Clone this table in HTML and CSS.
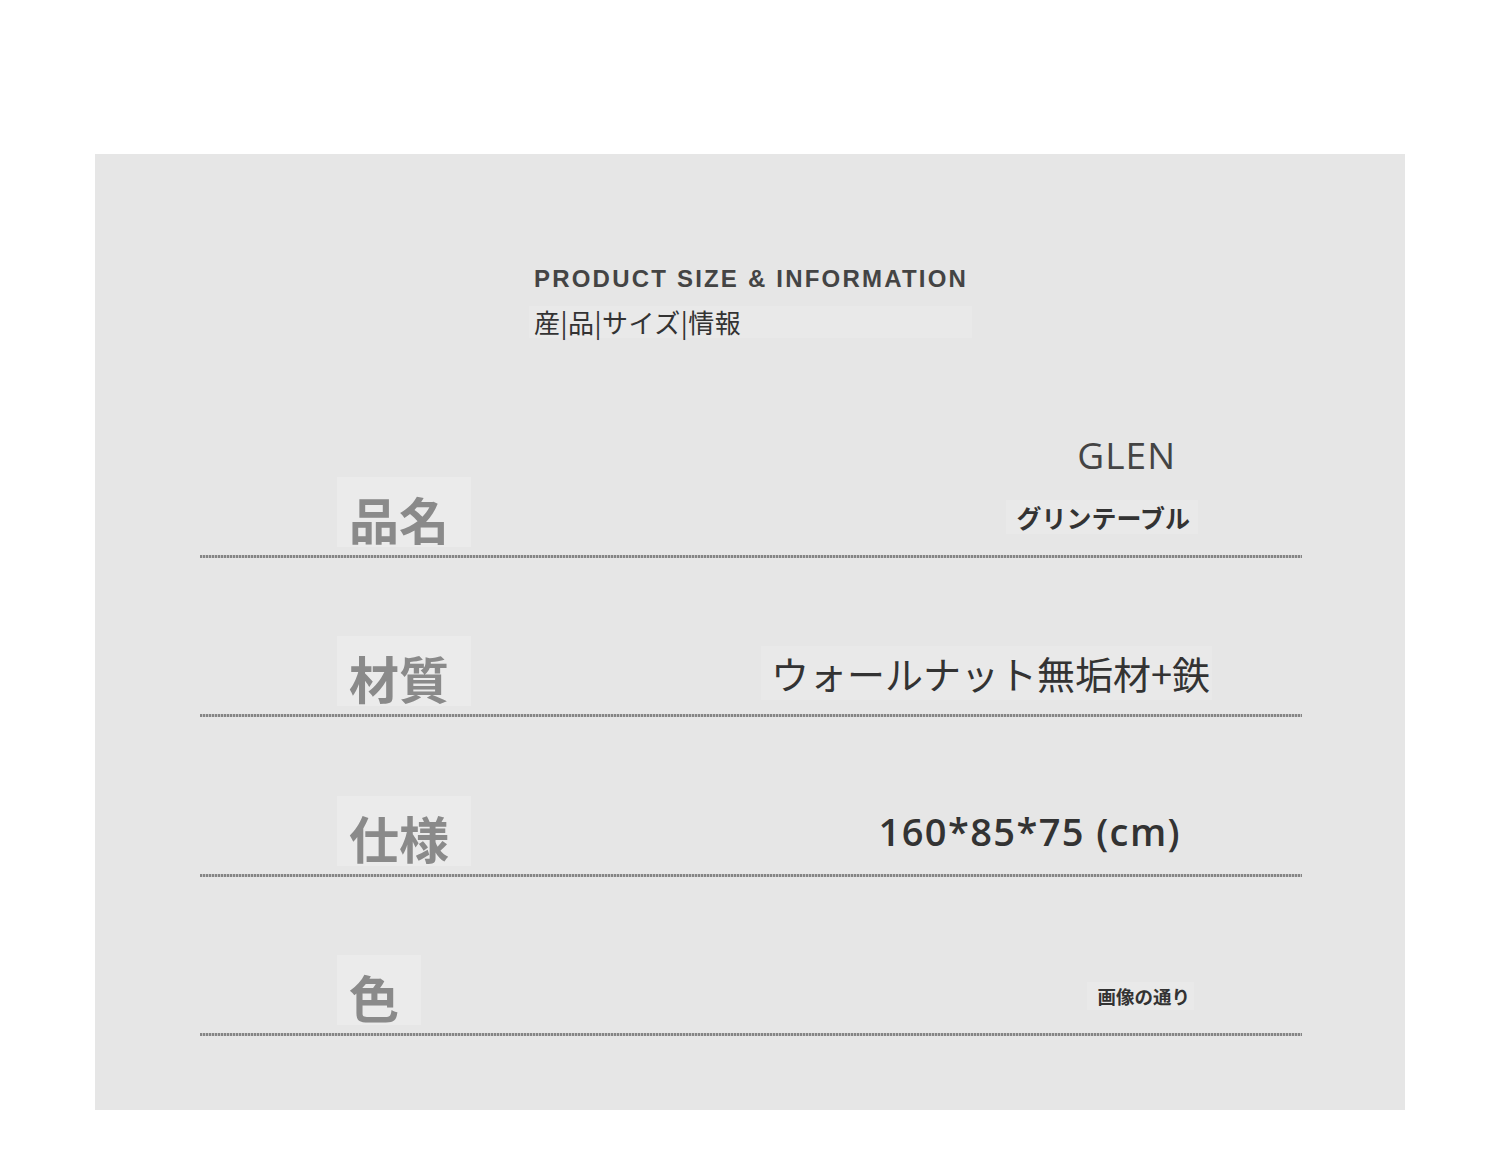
FILE: index.html
```html
<!DOCTYPE html>
<html lang="ja">
<head>
<meta charset="utf-8">
<title>Product Size &amp; Information</title>
<link rel="stylesheet" href="styles.css">
</head>
<body>
<div class="panel">
  <header class="heading">
    <h1 class="title">PRODUCT SIZE &amp; INFORMATION</h1>
    <p class="subtitle">産|品|サイズ|情報</p>
  </header>
  <div class="rows">
    <div class="row row-name">
      <div class="label">品名</div>
      <div class="value value-name">
        <span class="glen">GLEN</span>
        <span class="kana">グリンテーブル</span>
      </div>
    </div>
    <div class="row row-material">
      <div class="label">材質</div>
      <div class="value value-material">ウォールナット無垢材+鉄</div>
    </div>
    <div class="row row-spec">
      <div class="label">仕様</div>
      <div class="value value-spec">160*85*75 (cm)</div>
    </div>
    <div class="row row-color">
      <div class="label">色</div>
      <div class="value value-color">画像の通り</div>
    </div>
  </div>
</div>
</body>
</html>
```

FILE: styles.css
```css
* { box-sizing: border-box; }
html, body { margin: 0; padding: 0; background: #ffffff; }
body {
  width: 1500px;
  height: 1156px;
  font-family: "Noto Sans CJK JP", "Noto Sans", sans-serif;
}
.panel {
  margin: 154px 0 0 95px;
  width: 1310px;
  height: 956px;
  background: #e6e6e6;
  padding-top: 110px;
}
.heading {
  margin-left: 434px;
  width: 444px;
  padding: 0 0 4px 5px;
}
.title {
  margin: 0;
  white-space: nowrap;
  font-family: "Liberation Sans", Arial, sans-serif;
  font-weight: 700;
  font-size: 24px;
  line-height: 30px;
  letter-spacing: 2.2px;
  color: #444444;
}
.subtitle {
  margin: 12px 0 0 -5px;
  font-family: "Noto Sans CJK JP", sans-serif;
  font-size: 26px;
  line-height: 32px;
  letter-spacing: 0.5px;
  color: #333333;
  background: #e9e9e9;
  width: 443px;
  padding-left: 5px;
}
.rows {
  margin: 56px 0 0 105px;
  width: 1102px;
}
.row {
  height: 159.5px;
  display: flex;
  align-items: flex-end;
  justify-content: space-between;
  padding-bottom: 3px;
  background-image: repeating-linear-gradient(90deg, #858585 0 2px, #c4c4c4 2px 3px);
  background-repeat: no-repeat;
  background-position: left bottom;
  background-size: 100% 3px;
}
.label {
  margin-left: 137px;
  margin-bottom: 8px;
  padding: 14px 22px 2px 12px;
  background: #ebebeb;
  font-family: "Noto Sans CJK JP", sans-serif;
  font-weight: 700;
  font-size: 50px;
  line-height: 54px;
  color: #8a8a8a;
}
.value {
  color: #333333;
  font-family: "Noto Sans CJK JP", sans-serif;
}
.value-name {
  display: flex;
  flex-direction: column;
  align-items: flex-end;
  margin-right: 112px;
  margin-bottom: 21px;
}
.glen {
  font-family: "Open Sans", sans-serif;
  font-size: 37px;
  line-height: 44px;
  letter-spacing: 1px;
  color: #444444;
  margin-right: 14px;
  margin-bottom: 23px;
}
.kana {
  font-weight: 700;
  font-size: 25px;
  line-height: 34px;
  background: #e9e9e9;
  padding: 0 8px 0 10px;
  margin-right: -8px;
}
.value-material {
  font-size: 38px;
  line-height: 54px;
  margin-right: 90px;
  margin-bottom: 14px;
  background: #e9e9e9;
  padding: 0 2px 0 10px;
}
.value-spec {
  font-family: "Open Sans", sans-serif;
  font-weight: 600;
  font-size: 38px;
  line-height: 50px;
  letter-spacing: 1.4px;
  margin-right: 121px;
  margin-bottom: 18px;
}
.value-color {
  font-weight: 700;
  font-size: 18.5px;
  line-height: 28px;
  margin-right: 108px;
  margin-bottom: 23px;
  background: #e9e9e9;
  padding: 0 4px 0 10px;
}
```
